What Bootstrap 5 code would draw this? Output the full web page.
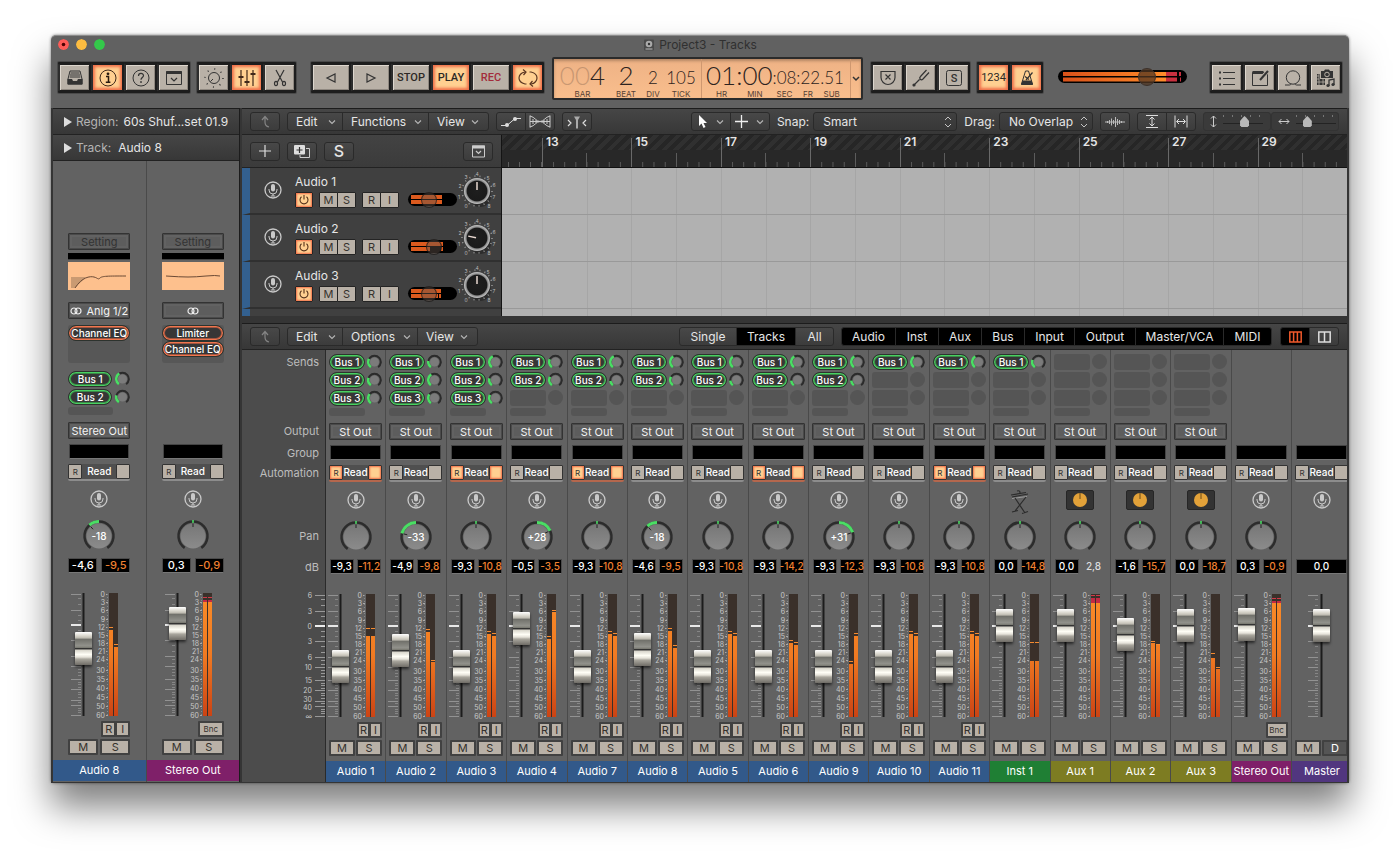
<!DOCTYPE html>
<html lang="en">
<head>
<meta charset="utf-8">
<meta name="viewport" content="width=device-width, initial-scale=1">
<title>Project3 - Tracks</title>
<link href="https://cdn.jsdelivr.net/npm/bootstrap@5.3.0/dist/css/bootstrap.min.css" rel="stylesheet">
<style>
:root{--tan:#b9b1a7;--hot:#f0704a;--glow:#ffd091}
body{background:#fff;min-height:100vh;padding:35px 51px;font-family:Inter,"Liberation Sans",sans-serif;font-size:12px;line-height:16px;color:#e6e6e6}
svg{display:block;flex:none}
button,select,input{font-family:inherit}
.daw{background:#616161;border-radius:5px 5px 3px 3px;box-shadow:0 24px 36px rgba(0,0,0,.5),0 0 3px rgba(0,0,0,.5);border-top:1px solid #8c8c8c}
.titlebar{height:17px;color:#303030;padding:0 7px}
.titlebar .light{width:11px;height:11px;border-radius:50%}
.titlebar .side{flex:1 1 0;gap:7px}
/* control bar */
.controlbar{height:55px;padding:9px 7px 0}
.keys{background:#1d1d1d;border-radius:1px;padding:1px;box-shadow:0 0 0 1px #4a4a4a}
.g7{margin-left:7px}.g8{margin-left:8px}.g15{margin-left:15px}
.key{width:33px;height:29px;padding:0;border:2px solid #1d1d1d;border-left-color:#2d2d2d;border-radius:2px;background:var(--tan);color:#2c2825;display:flex;align-items:center;justify-content:center;font:500 11px/16px Roboto,sans-serif;box-shadow:inset 1px 1px 0 #ddd6cd,inset -1px -1px 0 #8f8880}
.keys .key:first-child{margin-left:-1px}.keys .key:last-child{margin-right:-1px}
.key.wide{width:40px}
.key.lit{background:var(--glow);box-shadow:inset 0 0 3px 2px var(--hot)}
.key.thin{font-weight:400}
.key:hover{background:var(--tan);color:#2c2825;border-color:#1d1d1d}
.key.rec{color:#a32b3b}
.lcd{width:311px;height:43px;margin-top:-5px;background:linear-gradient(#eeb285,#f9be8d);border:2px solid #2b2b2b;border-radius:2px;color:#2d2320;box-shadow:inset 0 2px 3px rgba(0,0,0,.25)}
.lcd .cellx{display:flex;flex-direction:column;align-items:center;justify-content:flex-end}
.lcd .digits{height:30px;font:300 26px/30px Lato,sans-serif;white-space:nowrap}
.lcd .digits.sm{font-size:17px;line-height:36px}
.lcd small{font-size:8px;line-height:8px;height:8px;opacity:.8}
.lcd .dim{opacity:.22}
.lcd .sect{border-right:1px solid #cf9870}
.w-bar{width:49px}.w-beat{width:38px}.w-div{width:16px}.w-tick{width:40px}
.level{position:relative;background:#000;border-radius:8px}
.level svg{width:100%;height:100%}
.level input{position:absolute;inset:0;width:100%;height:100%}
input[type=range]{appearance:none;-webkit-appearance:none;background:transparent;margin:0;padding:0}
.level.master{width:129px;height:13px}
.level.master input::-webkit-slider-thumb{-webkit-appearance:none;width:18px;height:18px;border-radius:50%;background:rgba(80,55,35,.75);border:1px solid #3c3029}
.level.vol{width:49px;height:13px;margin:25px 0 0 9px}
.level.vol input::-webkit-slider-thumb{-webkit-appearance:none;width:16px;height:16px;border-radius:50%;background:rgba(100,85,75,.45);border:1px solid rgba(20,20,20,.7)}
/* panels */
.main{background:#353535;padding:0 2px 1px;gap:2px}
.inspector{width:187px;border:1px solid #1c1c1c;border-width:1px 1px 0 0}
.bar{height:26px;background:linear-gradient(#464646,#373737);border-bottom:1px solid #222;padding:0 8px}
.bar .lab{color:#b4b4b4;padding:0 5px 0 3px}
.bar .lab.wider{padding-right:7px}
.right{min-width:0}
.panel{border-top:1px solid #1c1c1c}
.panel+.panel{margin-top:7px}
.mb{height:19px;padding:0;border:1px solid #2a2a2a;border-radius:3px;background:linear-gradient(#484848,#3c3c3c);color:#e6e6e6;font-size:12px;line-height:16px;display:flex;align-items:center;justify-content:center}
.mb:hover{background:#505050;color:#fff;border-color:#2a2a2a}
.mb.flat{color:#888}
.mb.menu{justify-content:space-between;padding:0 6px 0 8px}
.mb.menu:last-child{padding-right:9px}
.btn-group>.mb:not(:last-child){border-top-right-radius:0;border-bottom-right-radius:0}
.btn-group>.mb:not(:first-child){border-top-left-radius:0;border-bottom-left-radius:0}
.mb.on{background:#000}
.mb.on:hover{background:#111}
.w30{width:30px}.w40{width:40px}
.pick{position:relative}
.pick select{width:100%;height:19px;padding:0 14px 0 9px;border:1px solid #2a2a2a;border-radius:3px;background:linear-gradient(#404040,#383838);color:#e6e6e6;font-size:12px;line-height:16px;appearance:none}
.pick svg{position:absolute;right:5px;top:4px;pointer-events:none}
.snapw{width:144px}.dragw{width:94px}
.zooms{height:19px;border:1px solid #333;border-radius:3px;background:#3a3a3a;width:68px;display:flex;align-items:center;gap:6px;padding:0 6px}
.zooms input{width:40px;height:15px;background:repeating-linear-gradient(90deg,#777 0 1px,transparent 1px 9px) 0 1px/100% 2px no-repeat,linear-gradient(#232323,#232323) 0 9px/100% 1px no-repeat}
.zooms input::-webkit-slider-thumb{-webkit-appearance:none;width:9px;height:11px;background:#b9b9b9;clip-path:polygon(50% 0,70% 15%,100% 45%,100% 85%,85% 100%,15% 100%,0 85%,0 45%,30% 15%)}
/* arrange */
.listcol{width:260px;border-right:1px solid #141414}
.listhead{height:33px;background:linear-gradient(#434343,#3b3b3b);border-bottom:1px solid #222;padding:0 8px;gap:7px}
.arr{height:148px;overflow:hidden}
.trk{height:47px;background:#404040;border-bottom:2px solid #303030;border-left:8px solid #33608f;padding-left:14px}
.trk .ctl{margin-left:13px}
.trk .nm{font-size:12px;line-height:17px;padding-top:5px;height:24px}
.trk .btns{gap:6px}
.tb{height:16px;width:19px;padding:0;border:1px solid #242424;border-radius:1px;background:var(--tan);color:#37322d;font-size:11px;line-height:13px;display:flex;align-items:center;justify-content:center}
.tb:hover{background:#cfc7bd;color:#222}
.tb.pw{width:18px;background:var(--glow);box-shadow:inset 0 0 2px 1px var(--hot)}
.ruler{height:33px;background:#282828;border-bottom:1px solid #111}
.ruler .seg{flex:1 1 0;font-size:12px;font-weight:600;line-height:14px;padding-left:4px;
 background:linear-gradient(#696969,#696969) 0 3px/1px 30px no-repeat,linear-gradient(90deg,transparent 50%,#5c5c5c 50%,#5c5c5c calc(50% + 1px),transparent 0) 0 18px/100% 15px no-repeat,linear-gradient(90deg,#5c5c5c 1px,transparent 1px) 0 27px/12.5% 6px repeat-x,repeating-linear-gradient(135deg,#303030 0 4px,#262626 4px 8px) 0 0/100% 15px no-repeat}
.ruler .lead-in{flex:0 0 40px;background:linear-gradient(90deg,#5c5c5c 1px,transparent 1px) 6px 27px/11px 6px repeat-x,repeating-linear-gradient(135deg,#303030 0 4px,#262626 4px 8px) 0 0/100% 15px no-repeat}
.lane{height:47px;background:#b1b1b1;border-bottom:1px solid #999}
.lane i{flex:1 1 0;border-left:1px solid #a6a6a6}
.lane i:first-child{flex:0 0 40px;border:0}
/* mixer */
.mixlabels{width:84px;background:#4c4c4c;border-right:1px solid #2a2a2a;color:#bdbdbd;font-size:11px;text-align:right}
.mixlabels>div{padding-right:6px}
.strips{display:grid;grid-template-columns:repeat(16,minmax(0,1fr)) 55px;flex:1 1 0;min-width:0}
.strip{background:#626262;overflow:hidden;border-right:1px solid #4a4a4a;font-size:11px}
.strip:last-child{border-right:0}
.strip .inner{width:60px;padding:0 4px 0 3px;margin:0 auto}
.strips .strip:last-child .inner{margin:0}
.strips .strip:last-child .nameband{width:60px}
.insp{flex:1 1 0}.insp .inner{width:62px;padding:0}
.r-sends{height:73px;padding-top:4px}.r-out{height:22px}.r-grp{height:20px}.r-auto{height:25px}.r-icon{height:30px}.r-pan{height:39px}.r-db{height:31px}.r-met{height:132px}.r-ri{height:18px}.r-ms{height:21px}
.insp .r-sends{height:51px;padding:0}
.nameband{height:21px;line-height:21px;text-align:center;color:#fff;white-space:nowrap}
.insp .nameband{margin-bottom:1px}
.c-blue{background:#32598a}.c-green{background:#1f7f34}.c-olive{background:#7d7c22}.c-pink{background:#7f2069}.c-purple{background:#51367f}
.pretop{padding-top:72px;height:92px}.gain{height:7px;background:#000;border-bottom:1px solid #444;margin-bottom:2px}.inp{padding-top:12px;height:35px}.ins{height:38px;background:#575757;border-radius:3px;margin-bottom:8px}
.send{height:18px;display:flex;justify-content:space-between;align-items:flex-start}
.pill{height:16px;width:36px;padding:0;border:1px solid #2d332e;box-shadow:inset 0 0 0 1px #4ad062,inset 0 0 0 2px #3a8a48;border-radius:8px;background:#363636;color:#fff;font-size:10px;font-weight:500;line-height:12px;white-space:nowrap;display:flex;justify-content:center;align-items:center}
.pill:hover{background:#444;color:#fff;border-color:#2d332e}
.insp .pill{width:44px}
.pill.fx,.pill.fx:hover{width:62px;height:16px;box-shadow:inset 0 0 0 1px #f0764f,inset 0 0 0 2px #a0553f}
.slot{height:16px;width:36px;border-radius:3px;background:#555}
.slot.short{height:8px}.insp .slot{width:45px}
.hole{width:15px;height:15px;border-radius:50%;background:#555}
.plate{width:100%;height:17px;padding:0;border:1px solid #333;border-radius:1px;background:#5d5d5d;box-shadow:inset 0 0 0 1px #4a4a4a,inset 0 0 0 3px #626262;color:#f4f4f4;font-size:11px;line-height:14px;display:flex;align-items:center;justify-content:center;gap:4px;white-space:nowrap}
.plate:hover{background:#6a6a6a;color:#fff;border-color:#333}
.plate.off{color:#333}
.grpbox{height:15px;background:#000;border:1px solid #444;border-bottom-color:#777;margin:0 1px}
.auto{height:17px;border-bottom:2px solid #8c8c8c;background:#4f4f4f;display:flex;justify-content:space-between;align-items:flex-start;border-radius:2px}
.auto.hotline{border-color:#b5674d}
.auto .k{width:14px;height:15px;padding:0;flex:none;border:1px solid #333;border-radius:1px;background:var(--tan);color:#333;font-size:8px;line-height:12px;text-align:center}
.auto .k.lit{background:var(--glow);box-shadow:inset 0 0 2px 1px var(--hot)}
.auto .rd{flex:1 1 0;min-width:0;border:0;padding:0;background:none;color:#fff;font-size:10px;font-weight:500;line-height:15px;display:flex;justify-content:center;white-space:nowrap}
.db{display:flex;justify-content:space-between;margin:0 1px}
.db span{width:24px;height:15px;background:#000;border:1px solid #4a4a4a;border-bottom-color:#777;font-size:10px;line-height:13px;font-weight:500;display:flex;justify-content:center;white-space:nowrap;color:#fff}
.db .pk{color:#f08030}.db .plain{background:none;border-color:transparent;color:#ddd}
.insp .db{margin:0}.insp .db span{width:29px;font-size:11px}
.db.one span{width:51px}
.knobbox{width:28px;height:20px;background:#333;border-radius:2px;border:1px solid #262626;display:flex;align-items:center;justify-content:center}
.met{position:relative;width:60px;margin:0 -4px}
.insp .met{margin:0}
.met .fader{position:absolute;left:-62px;top:57px;width:155px;height:17px;transform:rotate(-90deg)}
.met.solo .fader{left:-47px}
.fader::-webkit-slider-thumb{-webkit-appearance:none;width:33px;height:17px;border-radius:1px;box-shadow:-2px 0 3px rgba(0,0,0,.6);background:linear-gradient(270deg,#fff 0,#d8d5cb 12%,#bab7ad 19%,#6f6f69 21%,#92928c 42%,#77776f 48%,#333 49%,#333 52%,#d6d3c9 54%,#fffef6 68%,#e6e3da 76%,#a9a69d 82%,#6f6c66 100%)}
.ms{height:16px;flex:0 0 26px;padding:0;border:2px solid #414141;border-radius:1px;background:var(--tan);color:#33302c;font-size:11px;line-height:12px;display:flex;align-items:center;justify-content:center}
.ms:hover{background:#cfc7bd;border-color:#414141;color:#222}
.insp .ms{flex-basis:30px}
.ms.half{flex-basis:13px}.insp .ms.half{flex-basis:15px}
.ms.half+.half{margin-left:-1px}
.ms.bnc,.insp .ms.bnc{flex-basis:22px;font-size:8px}.insp .ms.bnc{flex-basis:26px}
.ms.dim{background:#555;color:#fff}
.eq{height:28px;background:#fdc08d;width:62px}
</style>
</head>
<body>
<svg width="0" height="0" class="position-absolute" aria-hidden="true">
 <defs>
  <linearGradient id="heat" gradientUnits="userSpaceOnUse" x1="0" y1="4" x2="0" y2="127"><stop offset="0" stop-color="#fb8c28"/><stop offset=".5" stop-color="#f07a22"/><stop offset="1" stop-color="#cb4314"/></linearGradient>
  <linearGradient id="heatx"><stop offset="0" stop-color="#d9521a"/><stop offset="1" stop-color="#ff8c2a"/></linearGradient>
  <radialGradient id="cap"><stop offset="0" stop-color="#1e1e1e"/><stop offset=".76" stop-color="#1a1a1a"/><stop offset=".84" stop-color="#8a8a8a"/><stop offset="1" stop-color="#c8c8c8"/></radialGradient>
  <linearGradient id="disc" x2="0" y2="1"><stop offset="0" stop-color="#777"/><stop offset="1" stop-color="#8b8b8b"/></linearGradient>
  <symbol id="mic" viewBox="0 0 18 18"><circle cx="9" cy="9" r="8" fill="none" stroke="#c9c9c9" stroke-width="1.3"/><rect x="7" y="3" width="4" height="7.5" rx="2" fill="#c9c9c9"/><path d="M5 8v1a4 4 0 0 0 8 0V8M9 13v2M6.800 15h4.400" fill="none" stroke="#c9c9c9"/></symbol>
  <symbol id="chev" viewBox="0 0 8 8"><path d="M1 2.500l3 3 3-3" fill="none" stroke="#b5b5b5" stroke-width="1.100"/></symbol>
  <symbol id="updown" viewBox="0 0 8 12"><path d="M1 4l3-3 3 3M1 8l3 3 3-3" fill="none" stroke="#c4c4c4"/></symbol>
  <symbol id="back" viewBox="0 0 14 14"><path d="M4 5l3-3.500L10 5M7 2v5c0 3 1.500 4.500 4 5" fill="none" stroke="#858585" stroke-width="1.200"/></symbol>
  <symbol id="stereo" viewBox="0 0 12 8"><circle cx="4" cy="4" r="3" fill="none" stroke="#eee" stroke-width="1.200"/><circle cx="8" cy="4" r="3" fill="none" stroke="#eee" stroke-width="1.200"/></symbol>
  <symbol id="power" viewBox="0 0 12 12"><path d="M3.500 2.800a4 4 0 1 0 5 0M6 1v4.500" fill="none" stroke="#54301a" stroke-width="1.100"/></symbol>
 </defs>
</svg>

<div class="daw">
 <header class="titlebar d-flex align-items-center">
  <div class="side d-flex">
   <svg class="light" viewBox="0 0 11 11"><circle cx="5.500" cy="5.500" r="5.500" fill="#fc5b57"/><circle cx="5.500" cy="5.500" r="1.800" fill="#4c0000"/></svg>
   <svg class="light" viewBox="0 0 11 11"><circle cx="5.500" cy="5.500" r="5.500" fill="#fdbc40"/></svg>
   <svg class="light" viewBox="0 0 11 11"><circle cx="5.500" cy="5.500" r="5.500" fill="#34c84a"/></svg>
  </div>
  <svg width="12" height="12" viewBox="0 0 12 12" class="me-1"><rect x="1" y=".5" width="10" height="11" rx="1" fill="#4a4a4a"/><circle cx="6" cy="5" r="3.300" fill="#aaa"/><circle cx="6" cy="5" r="1.200" fill="#333"/><path d="M2.500 10h7" stroke="#bbb"/></svg>
  <span>Project3 - Tracks</span>
  <div class="side"></div>
 </header>

 <div class="controlbar d-flex align-items-start">
  <div class="keys d-flex">
   <button class="btn key" aria-label="Library"><svg width="20" height="20" viewBox="0 0 20 20"><path d="M5 3h10l2 8v5H3v-5z" fill="none" stroke="#333"/><path d="M5.500 5h9M5 7h10M4.700 9h10.600" stroke="#333"/><path d="M2.500 11H7l1 2h4l1-2h4.500v5.500h-15z" fill="#333"/></svg></button>
   <button class="btn key lit" aria-label="Inspector"><svg width="20" height="20" viewBox="0 0 20 20"><circle cx="10" cy="10" r="8" fill="none" stroke="#40281a"/><circle cx="10" cy="5.800" r="1.400" fill="#2a1a10"/><path d="M8 8.500h2.500V14M7.800 14.200h4.600" fill="none" stroke="#2a1a10" stroke-width="1.500"/></svg></button>
   <button class="btn key" aria-label="Quick Help"><svg width="20" height="20" viewBox="0 0 20 20" fill="none" stroke="#333"><circle cx="10" cy="10" r="8"/><path d="M7.500 8c0-3.500 5-3.200 5-.500 0 2-2.500 2-2.500 4.300" stroke-width="1.200"/><circle cx="10" cy="14" r=".5" fill="#333"/></svg></button>
   <button class="btn key" aria-label="Toolbar"><svg width="20" height="20" viewBox="0 0 20 20"><path d="M2.500 3.500h15v13h-15z" fill="none" stroke="#333"/><path d="M2.500 3h15v3h-15z" fill="#333"/><path d="M7 10l3 3 3-3" fill="none" stroke="#333" stroke-width="1.200"/></svg></button>
  </div>
  <div class="keys d-flex g7">
   <button class="btn key" aria-label="Smart Controls"><svg width="22" height="20" viewBox="0 0 22 20"><circle cx="11" cy="10" r="5.500" fill="none" stroke="#333"/><path d="M7.500 13.500l2.500-2.500" stroke="#333"/><circle cx="11" cy="10" r="9" fill="none" stroke="#333" stroke-width="1.500" stroke-dasharray="1 6.070"/></svg></button>
   <button class="btn key lit" aria-label="Mixer"><svg width="20" height="20" viewBox="0 0 20 20" fill="none" stroke="#40281a" stroke-width="1.200"><path d="M4 2v16M10 2v16M16 2v16"/><path d="M1.500 9h5M7.500 14h5M13.500 6h5" stroke-width="2"/></svg></button>
   <button class="btn key" aria-label="Editors"><svg width="20" height="20" viewBox="0 0 20 20" fill="none" stroke="#333" stroke-width="1.200"><path d="M6 2l6.500 12M14 2L7.500 14"/><ellipse cx="6" cy="15.500" rx="1.500" ry="2.200"/><ellipse cx="14" cy="15.500" rx="1.500" ry="2.200"/></svg></button>
  </div>
  <div class="keys d-flex g15">
   <button class="btn key wide" aria-label="Rewind"><svg width="12" height="12" viewBox="0 0 12 12"><path d="M10 2v8L2 6z" fill="none" stroke="#333" stroke-width="1.200"/></svg></button>
   <button class="btn key wide" aria-label="Forward"><svg width="12" height="12" viewBox="0 0 12 12"><path d="M2 2v8l8-4z" fill="none" stroke="#333" stroke-width="1.200"/></svg></button>
   <button class="btn key wide">STOP</button>
   <button class="btn key wide lit">PLAY</button>
   <button class="btn key wide rec">REC</button>
   <button class="btn key lit" aria-label="Cycle"><svg width="22" height="20" viewBox="0 0 22 20" fill="none" stroke="#5a3520" stroke-width="1.200"><path d="M9.500 16H8C4 15 2 12.500 2 10s2-5.500 6-6M12.500 4H14c4 1 6 3.500 6 6s-2 5.500-6 6"/><path d="M6 1.500L9 4 6.500 7M16 18.500L13 16l2.500-3"/></svg></button>
  </div>

  <div class="lcd d-flex g8">
   <div class="sect d-flex ps-1">
    <div class="cellx w-bar"><span class="digits"><span class="dim">00</span>4</span><small>BAR</small></div>
    <div class="cellx w-beat"><span class="digits">2</span><small>BEAT</small></div>
    <div class="cellx w-div"><span class="digits sm">2</span><small>DIV</small></div>
    <div class="cellx w-tick"><span class="digits sm">105</span><small>TICK</small></div>
   </div>
   <div class="sect d-flex ps-1 flex-fill">
    <div class="cellx"><span class="digits">01:00</span><small class="d-flex justify-content-around w-100"><span>HR</span><span>MIN</span></small></div>
    <div class="cellx"><span class="digits sm">:08:22.51</span><small class="d-flex justify-content-between w-100 px-1"><span>SEC</span><span>FR</span><span>SUB</span></small></div>
   </div>
   <button class="btn p-0 border-0 d-flex align-items-center" aria-label="Display mode"><svg width="10" height="8" viewBox="0 0 10 8"><path d="M2 2l3 3 3-3" fill="none" stroke="#333" stroke-width="1.500"/></svg></button>
  </div>

  <div class="keys d-flex g8">
   <button class="btn key" aria-label="Replace"><svg width="20" height="20" viewBox="0 0 20 20" fill="none" stroke="#333" stroke-width="1.200"><path d="M3 3.500h14v6c0 4-3.500 7-7 7s-7-3-7-7zM7.500 6.500l5 5M12.500 6.500l-5 5"/></svg></button>
   <button class="btn key" aria-label="Tuner"><svg width="20" height="20" viewBox="0 0 20 20" fill="none" stroke="#333" stroke-width="1.200"><path d="M2.500 17.500l6-6M15.500 2l-6 6.500c-2 2 .5 4.500 2.500 2.500l6-6.500"/><circle cx="3" cy="17" r="1" fill="#333"/></svg></button>
   <button class="btn key" aria-label="Solo"><svg width="20" height="20" viewBox="0 0 20 20"><rect x="2.500" y="2.500" width="15" height="15" rx="2" fill="none" stroke="#333"/><text x="10" y="14" text-anchor="middle" font-size="11" fill="#333">S</text></svg></button>
  </div>
  <div class="keys d-flex g7">
   <button class="btn key lit thin">1234</button>
   <button class="btn key lit" aria-label="Metronome"><svg width="20" height="20" viewBox="0 0 20 20"><path d="M8.500 3h3l4 13h-11z" fill="none" stroke="#333"/><path d="M5.500 12.500h9l1.500 4.500H4z" fill="#333"/><path d="M9 12l6.500-7.500M8 8.500l4 3" stroke="#333" stroke-width="1.200"/></svg></button>
  </div>
  <div class="level master g15 mt-2"><svg viewBox="0 0 129 13" preserveAspectRatio="none"><path d="M5 2h103v4H5zM5 7.500h103v4H5z" fill="url(#heatx)"/><path d="M108 2h11v4h-11zM108 7.500h11v4h-11zM121 2h2v4h-2zM122 7.500h1v4h-1z" fill="#c8303f"/></svg><input type="range" min="0" max="100" value="72" aria-label="Master volume"></div>
  <div class="keys d-flex ms-auto">
   <button class="btn key" aria-label="Lists"><svg width="20" height="20" viewBox="0 0 20 20" stroke="#333"><path d="M6 4.500h12M6 10.500h12M6 16.500h12"/><path d="M2 4.500h2M2 10.500h2M2 16.500h2" stroke-width="2"/></svg></button>
   <button class="btn key" aria-label="Notes"><svg width="20" height="20" viewBox="0 0 20 20"><path d="M2.500 4.500h15v13h-15z" fill="none" stroke="#333"/><path d="M2.500 3h11v3h-11z" fill="#333"/><path d="M10 11.500l8-8.500" stroke="#b9b1a7" stroke-width="4"/><path d="M10 12l8-9" stroke="#333" stroke-width="2"/></svg></button>
   <button class="btn key" aria-label="Loops"><svg width="20" height="20" viewBox="0 0 20 20" fill="none" stroke="#333"><circle cx="10" cy="9.500" r="6.700"/><path d="M2 17h4.500c1.500 0 1.500-1 1-1.500M18 17h-4.500c-1.500 0-1.500-1-1-1.500"/></svg></button>
   <button class="btn key" aria-label="Browsers"><svg width="22" height="20" viewBox="0 0 22 20"><path d="M6 3h3l1-1.500h4L15 3h3v7H6z" fill="#333"/><circle cx="12" cy="6.500" r="2.300" fill="#333" stroke="#b9b1a7"/><path d="M2 6h3v5h5v6H2z" fill="#333"/><path d="M4 6v11M8 11v6M2 8h2M2 11h2M2 14h8" stroke="#b9b1a7" stroke-width=".8"/><path d="M14 18v-6l5-1v6" fill="none" stroke="#333" stroke-width="1.300"/><circle cx="13" cy="17.500" r="1.600" fill="#333"/><circle cx="18" cy="16.500" r="1.600" fill="#333"/></svg></button>
  </div>
 </div>

 <div class="main d-flex">
  <aside class="inspector flex-shrink-0">
   <div class="bar d-flex align-items-center"><svg width="12" height="10" viewBox="0 0 12 10"><path d="M3 0l8 5-8 5z" fill="#ddd"/></svg><span class="lab">Region:</span><span>60s Shuf...set 01.9</span></div>
   <div class="bar d-flex align-items-center"><svg width="12" height="10" viewBox="0 0 12 10"><path d="M3 0l8 5-8 5z" fill="#ddd"/></svg><span class="lab wider">Track:</span><span>Audio 8</span></div>
   <div class="d-flex" id="inspStrips"></div>
  </aside>

  <div class="right flex-fill">
   <section class="panel">
    <div class="bar d-flex align-items-center">
     <button class="btn mb flat w30" aria-label="Up"><svg width="14" height="14"><use href="#back"/></svg></button>
     <div class="btn-group mgroup g7" data-menu="Edit:56,Functions:87,View:61"></div>
     <div class="btn-group g7">
      <button class="btn mb w30" aria-label="Automation"><svg width="20" height="10" viewBox="0 0 20 10"><path d="M0 8.500h6L14 1.500h6" fill="none" stroke="#ddd"/><circle cx="6" cy="8" r="2" fill="#ddd"/><circle cx="14" cy="2" r="2" fill="#ddd"/></svg></button>
      <button class="btn mb w30" aria-label="Flex"><svg width="22" height="13" viewBox="0 0 22 13" fill="none" stroke="#ccc"><path d="M1 .5v12M21 .5v12M1 1c5 1 6 5.500 10 5.500S16 2 21 1M1 12c5-1 6-5.500 10-5.500S16 11 21 12M1 6.500h20M4 4v5M7 5v3M15 5v3M18 4v5"/></svg></button>
     </div>
     <button class="btn mb w30 g7" aria-label="Catch playhead"><svg width="20" height="14" viewBox="0 0 20 14" fill="none" stroke="#ddd" stroke-width="1.200"><path d="M1 5l3 3-3 3M19 5l-3 3 3 3"/><path d="M7 1.500h6L11 5v8.500H9V5z" fill="#aaa" stroke="none"/></svg></button>
     <div class="btn-group ms-auto">
      <button class="btn mb w40 gap-2" aria-label="Pointer tool"><svg width="10" height="14" viewBox="0 0 10 14"><path d="M1 0v11l2.500-2.500L5.500 13l2-1-2-4H9z" fill="#fff"/></svg><svg width="8" height="8"><use href="#chev"/></svg></button>
      <button class="btn mb w40 gap-2" aria-label="Marquee tool"><svg width="13" height="13" viewBox="0 0 13 13"><path d="M6.500 0v5M6.500 8v5M0 6.500h5M8 6.500h5M6.500 5v3M5 6.500h3" stroke="#eee" stroke-width="1.300"/></svg><svg width="8" height="8"><use href="#chev"/></svg></button>
     </div>
     <label class="g7 me-1" for="snap">Snap:</label>
     <div class="pick snapw"><select id="snap"><option>Smart</option><option>Bar</option><option>Beat</option></select><svg width="8" height="12"><use href="#updown"/></svg></div>
     <label class="g7 me-1" for="drag">Drag:</label>
     <div class="pick dragw"><select id="drag"><option>No Overlap</option><option>Overlap</option></select><svg width="8" height="12"><use href="#updown"/></svg></div>
     <button class="btn mb w30 g7" aria-label="Waveform zoom"><svg width="20" height="12" viewBox="0 0 20 12"><path d="M0 6h20M2.500 5v2M4.500 4v4M6.500 2.500v7M8.500 4v4M10.500 1v10M12.500 3v6M14.500 4v4M16.500 5v2" stroke="#bbb"/></svg></button>
     <div class="btn-group g7">
      <button class="btn mb w30" aria-label="Fit vertically"><svg width="14" height="13" viewBox="0 0 14 13" fill="none" stroke="#ddd"><path d="M1 .5h12M1 12.500h12M7 2.500v8M4.500 4.500L7 2l2.500 2.500M4.500 8.500L7 11l2.500-2.500"/></svg></button>
      <button class="btn mb w30" aria-label="Fit horizontally"><svg width="14" height="13" viewBox="0 0 14 13" fill="none" stroke="#ddd"><path d="M1 .5v12M13 .5v12M3 6.500h8M5 4L2.500 6.500 5 9M9 4l2.500 2.500L9 9"/></svg></button>
     </div>
     <div class="zooms g7"><svg width="7" height="13" viewBox="0 0 7 13" fill="none" stroke="#ccc"><path d="M3.500 1v11M1 3.500L3.500 1 6 3.500M1 9.500L3.500 12 6 9.500"/></svg><input type="range" value="55" aria-label="Vertical zoom"></div>
     <div class="zooms"><svg width="12" height="7" viewBox="0 0 12 7" fill="none" stroke="#ccc"><path d="M1 3.500h10M3.500 1L1 3.500 3.500 6M8.500 1L11 3.500 8.500 6"/></svg><input type="range" value="22" aria-label="Horizontal zoom"></div>
    </div>
    <div class="d-flex">
     <div class="listcol flex-shrink-0">
      <div class="listhead d-flex align-items-center">
       <button class="btn mb w30" aria-label="Add track"><svg width="12" height="12" viewBox="0 0 12 12"><path d="M6 0v12M0 6h12" stroke="#ddd" stroke-width="1.200"/></svg></button>
       <button class="btn mb w30" aria-label="Duplicate track"><svg width="16" height="13" viewBox="0 0 16 13"><path d="M12 3.500h3.500v9H6V10" fill="none" stroke="#ccc"/><rect width="11" height="9.500" rx="1" fill="#ddd"/><path d="M5.500 2v6M2.500 5h6" stroke="#333" stroke-width="1.200"/></svg></button>
       <button class="btn mb w30 fs-6 fw-medium" aria-label="Solo">S</button>
       <button class="btn mb w30 ms-auto" aria-label="Header options"><svg width="13" height="13" viewBox="0 0 13 13"><path d="M.5 1h12v11H.5z" fill="none" stroke="#ccc"/><path d="M0 .5h13v3H0z" fill="#ccc"/><path d="M4 6l2.500 2.500L9 6" fill="none" stroke="#ccc" stroke-width="1.200"/></svg></button>
      </div>
      <div class="arr" id="tracks"></div>
     </div>
     <div class="flex-fill">
      <div class="ruler d-flex" id="ruler"><div class="lead-in"></div></div>
      <div class="arr" id="lanes"></div>
     </div>
    </div>
   </section>

   <section class="panel">
    <div class="bar d-flex align-items-center">
     <button class="btn mb flat w30" aria-label="Up"><svg width="14" height="14"><use href="#back"/></svg></button>
     <div class="btn-group mgroup g7" data-menu="Edit:56,Options:76,View:61"></div>
     <div class="btn-group tgroup ms-auto" data-tabs="Single:58,*Tracks:60,All:39"></div>
     <div class="btn-group tgroup g7" data-tabs="*Audio:55,*Inst:44,*Aux:44,*Bus:44,*Input:51,*Output:62,*Master/VCA:89,*MIDI:49"></div>
     <div class="btn-group g8">
      <button class="btn mb on w30" aria-label="Narrow strips"><svg width="13" height="12" viewBox="0 0 13 12" fill="none" stroke="#f0592b" stroke-width="1.500"><path d="M.8 1h11.400v10H.8zM4.600 1v10M8.400 1v10"/></svg></button>
      <button class="btn mb w30" aria-label="Wide strips"><svg width="13" height="12" viewBox="0 0 13 12" fill="none" stroke="#ddd" stroke-width="1.500"><path d="M.8 1h11.400v10H.8zM6.500 1v10"/></svg></button>
     </div>
    </div>
    <div class="d-flex">
     <div class="mixlabels flex-shrink-0">
      <div class="r-sends">Sends</div><div class="r-out">Output</div><div class="r-grp">Group</div><div class="r-auto">Automation</div><div class="r-icon"></div><div class="r-pan pt-2">Pan</div><div class="r-db">dB</div>
      <div class="r-met p-0" id="dbscale"></div>
     </div>
     <div class="strips" id="strips"></div>
    </div>
   </section>
  </div>
 </div>
</div>

<script src="https://cdn.jsdelivr.net/npm/bootstrap@5.3.0/dist/js/bootstrap.bundle.min.js"></script>
<script>
const $ = id => document.getElementById(id);
const use = (id, w, h) => `<svg width="${w}" height="${h}"><use href="#${id}"/></svg>`;

// Toolbars: "label:width" pairs
document.querySelectorAll('.mgroup').forEach(g => {
  g.innerHTML = g.dataset.menu.split(',').map(m => { const [t, w] = m.split(':');
    return `<button class="btn mb menu" style="width:${w}px">${t}${use('chev', 8, 8)}</button>`; }).join('');
});
document.querySelectorAll('.tgroup').forEach(g => {
  g.innerHTML = g.dataset.tabs.split(',').map(m => { const [t, w] = m.split(':'); const on = t[0] === '*';
    return `<button class="btn mb${on ? ' on' : ''}" style="width:${w}px">${t.replace('*', '')}</button>`; }).join('');
});

// Ruler and lanes
for (let n = 13; n <= 29; n += 2) $('ruler').insertAdjacentHTML('beforeend', `<div class="seg">${n}</div>`);
$('lanes').innerHTML = Array(4).fill(`<div class="lane d-flex">${'<i></i>'.repeat(19)}</div>`).join('');

// Track headers
const polar = (cx, cy, r, a) => [cx + r * Math.sin(a * Math.PI / 180), cy - r * Math.cos(a * Math.PI / 180)].map(v => v.toFixed(2)).join(' ');
const arc = (cx, cy, r, a, b) => `M${polar(cx, cy, r, a)}A${r} ${r} 0 ${b - a > 180 ? 1 : 0} 1 ${polar(cx, cy, r, b)}`;
const dialNums = [['0',-11,15],['1',-18,6],['2',-17,-5],['3',-11,-14],['4',0,-17],['5',11,-13],['6',17,-6],['7',17,6],['8',12,15]];
const dial = a => `<svg width="40" height="46" viewBox="0 0 40 46"><circle cx="23" cy="28" r="11" fill="#2c2c2c"/><circle cx="20" cy="23" r="15" fill="none" stroke="#999" stroke-width="1.500" stroke-dasharray="1 4.200"/><circle cx="20" cy="23" r="13" fill="url(#cap)"/><path d="M${polar(20,23,9,a)}L${polar(20,23,1,a)}" stroke="#e8d8d0" stroke-width="1.500"/>${dialNums.map(([t,x,y]) => `<text x="${20+x}" y="${25+y}" font-size="5" fill="#bbb" text-anchor="middle">${t}</text>`).join('')}</svg>`;
const tracks = [
  {n:'Audio 1', pan:0, vol:40, lv:[30,30], pk:32},
  {n:'Audio 2', pan:-78, vol:54, lv:[30,19], pk:33},
  {n:'Audio 3', pan:0, vol:40, lv:[28,27], pk:31}];
$('tracks').innerHTML = tracks.map(t => `<div class="trk d-flex align-items-start">
  <div class="pt-2 mt-1">${use('mic', 18, 20)}</div>
  <div class="ctl"><div class="nm">${t.n}</div>
   <div class="d-flex btns"><button class="btn tb pw" aria-label="${t.n} on">${use('power', 12, 12)}</button>
    <div class="btn-group"><button class="btn tb">M</button><button class="btn tb">S</button></div>
    <div class="btn-group"><button class="btn tb">R</button><button class="btn tb">I</button></div></div></div>
  <div class="level vol"><svg viewBox="0 0 49 13"><path d="M3 2h${t.lv[0]}v4H3zM3 7h${t.lv[1]}v4H3zM${t.pk} 2h2v4h-2zM${t.pk} 7h2v4h-2z" fill="#dc5a1e"/></svg><input type="range" value="${t.vol}" aria-label="${t.n} volume"></div>
  ${dial(t.pan)}</div>`).join('') + '<div class="trk"></div>';

// Mixer strips
const majors = [5,21,51,67,77,90,100,111,116,126];
const minors = [9,15,26,31,41,46,56,62,70,74,80,83,86,93,95,98,103,105,108,113,119,121,123];
const scale = [[0,5],[3,13],[6,21],[9,30],[12,38],[15,46],[18,54],[21,62],[24,70],[30,81],[35,90],[40,99],[45,108],[50,117],[60,126]];
const faderTicks = x => `<path d="${majors.map(y => `M${x} ${y}.5h10`).join('')}" stroke="#929292"/><path d="${minors.map(y => `M${x+7} ${y}.5h3`).join('')}" stroke="#868686"/><path d="M${x} 36h10" stroke="#e8e8e8" stroke-width="2"/>`;
function meter(m, hot) {
  if (!m) return '';
  let s = '<rect x="41" y="4" width="9" height="123" fill="#3a302a"/>';
  m.forEach(([top, peak], i) => { const x = 41 + i * 5;
    s += `<rect x="${x}" y="${top}" width="4" height="${127-top}" fill="url(#heat)"/>`;
    if (hot) s += `<rect x="${x}" y="${top-hot}" width="4" height="${hot}" fill="#c32a44"/>`;
    s += `<rect x="${x}" y="${peak}" width="4" height="1" fill="${hot ? '#d23a48' : '#f58a30'}"/>`; });
  return s + scale.map(([t,y]) => `<text x="37" y="${y+3}" text-anchor="end">${t}</text>`).join('')
    + `<path d="${scale.map(([,y]) => `M38 ${y}.5h2`).join('')}" stroke="#aaa"/><path d="M39.500 5v122" stroke="#888" stroke-dasharray="1 2"/>`;
}
function send(label, end) {
  return `<div class="send"><button class="btn pill">${label}</button><svg width="15" height="16" viewBox="0 0 15 16"><circle cx="7.500" cy="8" r="4.500" fill="#7b7b7b"/><path d="${arc(7.5,8,6.3,-145,145)}" fill="none" stroke="#2b2b2b" stroke-width="2"/><path d="${arc(7.5,8,6.3,-145,end)}" fill="none" stroke="#4ade64" stroke-width="2.500"/></svg></div>`;
}
function sends(s) {
  if (!s.sends) return '';
  let h = s.sends.map((e, i) => send('Bus ' + (i + 1), e)).join('');
  if (!s.insp) for (let i = s.sends.length; i < 3; i++) h += '<div class="send"><div class="slot"></div><div class="hole"></div></div>';
  return h + '<div class="slot short"></div>';
}
function pan(p) {
  if (p === undefined) return '';
  const a = p * 2.3, t = p ? (p > 0 ? '+' + p : '' + p) : '';
  const g = p < 0 ? arc(18,17,14.500,a,0) : p > 0 ? arc(18,17,14.500,0,a) : arc(18,17,14.500,-3,3);
  return `<svg width="36" height="34" viewBox="0 0 36 34" role="img" aria-label="Pan"><circle cx="18" cy="17" r="12.500" fill="url(#disc)"/><path d="${arc(18,17,14.500,-145,145)}" fill="none" stroke="#2c2c2c" stroke-width="2.500"/><path d="${g}" fill="none" stroke="#4ade64" stroke-width="3"/><path d="M${polar(18,17,12.500,a)}L${polar(18,17,9,a)}" stroke="#222"/><text x="18" y="21" font-size="10" font-weight="500" text-anchor="middle" fill="#fff">${t}</text></svg>`;
}
const icons = {
  mic: use('mic', 18, 20),
  aux: '<div class="knobbox"><svg width="16" height="16" viewBox="0 0 16 16"><circle cx="8" cy="8" r="7" fill="#e3a239"/><path d="M8 1v6" stroke="#6a4a18"/></svg></div>',
  keys: '<svg width="22" height="26" viewBox="0 0 22 26" fill="none" stroke="#2b2b2b"><path d="M3 7l16-3M2 5l15-2.500" stroke-width="1.200"/><path d="M3 8.500l15-2" stroke="#999"/><path d="M8 1c3-1 3 1 3 2M6 8l10 15M17 7L6 21M3 22l6-1.500M13 23.500l6-2" stroke-width="1.200"/></svg>'
};
function strip(s) {
  const x = s.solo ? 17 : 3, tx = s.solo ? 30 : 15;
  return `<div class="strip ${s.insp ? 'insp' : ''}"><div class="inner">${s.pre || ''}
   <div class="r-sends">${sends(s)}</div>
   <div class="r-out">${s.out ? `<button class="btn plate">${s.out}</button>` : ''}</div>
   <div class="r-grp"><div class="grpbox"></div></div>
   <div class="r-auto"><div class="auto ${s.hot ? 'hotline' : ''}"><button class="k ${s.hot ? 'lit' : ''}">R</button><button class="rd">Read</button><button class="k ${s.hot ? 'lit' : ''}" aria-label="Trim"></button></div></div>
   <div class="r-icon d-flex justify-content-center align-items-start">${icons[s.icon || 'mic']}</div>
   <div class="r-pan d-flex justify-content-center">${pan(s.pan)}</div>
   <div class="r-db"><div class="db ${s.solo ? 'one' : ''}"><span>${s.db[0]}</span>${s.db[1] ? `<span class="${s.plain ? 'plain' : 'pk'}">${s.db[1]}</span>` : ''}</div></div>
   <div class="r-met"><div class="met ${s.solo ? 'solo' : ''}"><svg width="60" height="132" viewBox="0 0 60 132" font-size="7" fill="#c8c8c8">${faderTicks(x)}<path d="M${tx+.5} 4v123" stroke="#1c1c1c" stroke-width="2"/>${meter(s.m, s.red)}</svg>
     <input class="fader" type="range" min="0" max="121" value="${716 - s.f}" aria-label="${s.n} level"></div></div>
   <div class="r-ri d-flex justify-content-end">${s.ri ? '<button class="btn ms half">R</button><button class="btn ms half">I</button>' : s.bnc ? '<button class="btn ms bnc">Bnc</button>' : ''}</div>
   <div class="r-ms d-flex justify-content-between"><button class="btn ms">M</button>${s.solo ? '<button class="btn ms dim">D</button>' : '<button class="btn ms">S</button>'}</div>
  </div><div class="nameband ${s.c}">${s.n}</div></div>`;
}
const std = [[44,41],[46,43]];
const audio = o => Object.assign({out:'St Out', c:'c-blue', ri:1, pan:0, f:666, m:std, db:['-9,3','-10,8']}, o);
const list = [
  audio({n:'Audio 1', sends:[-60,-70,-50], hot:1, db:['-9,3','-11,2'], m:[[46,38],[46,38]]}),
  audio({n:'Audio 2', sends:[-80,-30,-55], pan:-33, db:['-4,9','-9,8'], f:651, m:[[42,39],[72,70]]}),
  audio({n:'Audio 3', sends:[-25,-75,-60], hot:1}),
  audio({n:'Audio 4', sends:[-65,-60], pan:28, db:['-0,5','-3,5'], f:629, m:[[49,46],[22,20]]}),
  audio({n:'Audio 7', sends:[-25,-100], hot:1}),
  audio({n:'Audio 8', sends:[-30,-60], pan:-18, db:['-4,6','-9,5'], f:650, m:[[41,38],[58,55]]}),
  audio({n:'Audio 5', sends:[-35,-95]}),
  audio({n:'Audio 6', sends:[-30,-95], hot:1, db:['-9,3','-14,2'], m:[[53,50],[55,52]]}),
  audio({n:'Audio 9', sends:[-30,-95], pan:31, db:['-9,3','-12,3'], m:[[74,71],[46,43]]}),
  audio({n:'Audio 10', sends:[-35]}),
  audio({n:'Audio 11', sends:[-30], hot:1}),
  audio({n:'Inst 1', sends:[-70], ri:0, c:'c-green', icon:'keys', f:626, db:['0,0','-14,8'], m:[[71,52],[71,52]]}),
  audio({n:'Aux 1', sends:[], ri:0, c:'c-olive', icon:'aux', f:626, db:['0,0','2,8'], plain:1, m:[[13,5],[13,5]], red:5}),
  audio({n:'Aux 2', sends:[], ri:0, c:'c-olive', icon:'aux', f:635, db:['-1,6','-15,7'], m:[[53,51],[54,54]]}),
  audio({n:'Aux 3', sends:[], ri:0, c:'c-olive', icon:'aux', f:626, db:['0,0','-18,7'], m:[[68,63],[79,77]]}),
  audio({n:'Stereo Out', out:'', ri:0, bnc:1, c:'c-pink', f:625, db:['0,3','-0,9'], m:[[13,8],[13,8]], red:2}),
  {n:'Master', solo:1, c:'c-purple', f:626, db:['0,0']}
];
$('strips').innerHTML = list.map(strip).join('');

// Inspector strips carry setting, EQ, input and insert slots above the sends
const pre = (curve, input, fx) => `<div class="pretop"><button class="btn plate off">Setting</button></div><div class="gain"></div><svg class="eq" viewBox="0 0 62 28">${curve}</svg><div class="inp"><button class="btn plate">${use('stereo', 12, 8)}${input}</button></div><div class="ins">${fx.map(f => `<button class="btn pill fx">${f}</button>`).join('')}</div>`;
$('inspStrips').innerHTML = [
  audio({n:'Audio 8', insp:1, out:'Stereo Out', sends:[-30,-75], pan:-18, db:['-4,6','-9,5'], f:650, m:[[41,38],[58,55]],
    pre: pre('<path d="M3 15h15l-11 11H3z" fill="#c99a72"/><path d="M7 26C14 15 22 14 26 15s4 3 6 1 8-2 26-2" fill="none" stroke="#6b4a35"/>', 'Anlg 1/2', ['Channel EQ'])}),
  audio({n:'Stereo Out', insp:1, out:'', ri:0, bnc:1, c:'c-pink', f:625, db:['0,3','-0,9'], m:[[13,8],[13,8]], red:2,
    pre: pre('<path d="M4 14q14 1 22 1t18-1 14 0" fill="none" stroke="#6b4a35"/>', '', ['Limiter','Channel EQ'])})
].map(strip).join('');

// dB scale beside the first strip
const lab = [['6',5],['3',21],['0',36],['3',51],['6',67],['10',77],['15',90],['20',100],['30',109],['40',117],['∞',126]];
$('dbscale').innerHTML = `<svg class="ms-auto" width="82" height="132" viewBox="0 0 82 132" font-size="7" fill="#c8c8c8">${lab.map(([t,y]) => `<text x="69" y="${y+3}" text-anchor="end">${t}</text>`).join('')}<path d="${majors.map(y => `M72 ${y}.5h10`).join('')}${minors.map(y => `M78 ${y}.5h4`).join('')}" stroke="#999"/><path d="M72 36h10" stroke="#eee" stroke-width="2"/></svg>`;
</script>
</body>
</html>
